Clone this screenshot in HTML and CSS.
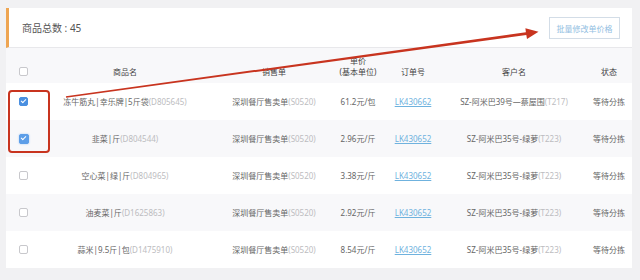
FILE: index.html
```html
<!DOCTYPE html>
<html lang="zh-CN">
<head>
    <meta charset="UTF-8">
    <meta name="viewport" content="width=device-width, initial-scale=1.0">
    <title>商品列表</title>
    <link rel="stylesheet" href="styles.css">
</head>
<body>
    <div class="panel">
        <div class="panel-head">
            <span class="total">商品总数 : 45</span>
            <button class="batch-btn">批量修改单价格</button>
        </div>
        <div class="list">
            <div class="row head-row">
                <div class="cell"><span class="box"></span></div>
                <div class="cell">商品名</div>
                <div class="cell">销售单</div>
                <div class="cell two-line">单价<br>(基本单位)</div>
                <div class="cell">订单号</div>
                <div class="cell">客户名</div>
                <div class="cell state">状态</div>
            </div>
            <div class="row">
                <div class="cell"><span class="box checked"></span></div>
                <div class="cell">冻牛筋丸|幸乐牌|5斤袋<span class="code">(D805645)</span></div>
                <div class="cell">深圳餐厅售卖单<span class="code">(S0520)</span></div>
                <div class="cell">61.2元/包</div>
                <div class="cell"><a class="link" href="#">LK430662</a></div>
                <div class="cell">SZ-阿米巴39号—蔡屋围<span class="code">(T217)</span></div>
                <div class="cell state">等待分拣</div>
            </div>
            <div class="row">
                <div class="cell"><span class="box checked focus"></span></div>
                <div class="cell">韭菜|斤<span class="code">(D804544)</span></div>
                <div class="cell">深圳餐厅售卖单<span class="code">(S0520)</span></div>
                <div class="cell">2.96元/斤</div>
                <div class="cell"><a class="link" href="#">LK430652</a></div>
                <div class="cell">SZ-阿米巴35号-绿萝<span class="code">(T223)</span></div>
                <div class="cell state">等待分拣</div>
            </div>
            <div class="row">
                <div class="cell"><span class="box"></span></div>
                <div class="cell">空心菜|绿|斤<span class="code">(D804965)</span></div>
                <div class="cell">深圳餐厅售卖单<span class="code">(S0520)</span></div>
                <div class="cell">3.38元/斤</div>
                <div class="cell"><a class="link" href="#">LK430652</a></div>
                <div class="cell">SZ-阿米巴35号-绿萝<span class="code">(T223)</span></div>
                <div class="cell state">等待分拣</div>
            </div>
            <div class="row">
                <div class="cell"><span class="box"></span></div>
                <div class="cell">油麦菜|斤<span class="code">(D1625863)</span></div>
                <div class="cell">深圳餐厅售卖单<span class="code">(S0520)</span></div>
                <div class="cell">2.92元/斤</div>
                <div class="cell"><a class="link" href="#">LK430652</a></div>
                <div class="cell">SZ-阿米巴35号-绿萝<span class="code">(T223)</span></div>
                <div class="cell state">等待分拣</div>
            </div>
            <div class="row">
                <div class="cell"><span class="box"></span></div>
                <div class="cell">蒜米|9.5斤|包<span class="code">(D1475910)</span></div>
                <div class="cell">深圳餐厅售卖单<span class="code">(S0520)</span></div>
                <div class="cell">8.54元/斤</div>
                <div class="cell"><a class="link" href="#">LK430652</a></div>
                <div class="cell">SZ-阿米巴35号-绿萝<span class="code">(T223)</span></div>
                <div class="cell state">等待分拣</div>
            </div>
        </div>
    </div>
    <svg class="annotation" width="640" height="280" viewBox="0 0 640 280">
        <rect x="9" y="91" width="40" height="61" rx="3" fill="none" stroke="#c8341f" stroke-width="2"/>
        <path d="M65.9 96.3 L525.9 32.3 L525.4 28.2 L538.5 31.8 L527 39 L526.3 35.1 L66.1 97.7 Z" fill="#c8341f"/>
    </svg>
</body>
</html>
```

FILE: styles.css
```css
body {
    margin: 0;
    padding: 8px 8px 0 6px;
    background: #f1f1f3;
    font-family: "Noto Sans", "Noto Sans CJK SC", sans-serif;
    color: #666;
    position: relative;
    height: 280px;
    box-sizing: border-box;
    overflow: hidden;
}
.panel {
    width: 626px;
    background: #fff;
}
.panel-head {
    height: 40px;
    box-sizing: border-box;
    display: flex;
    justify-content: space-between;
    align-items: center;
    border-left: 3px solid #eea552;
    border-bottom: 1px solid #e8e8eb;
    padding: 0 12px 0 13px;
}
.total {
    font-size: 10px;
    color: #555;
}
.batch-btn {
    width: 71px;
    height: 22px;
    padding: 0;
    margin-top: 1px;
    background: #fff;
    border: 1px solid #d3dde7;
    color: #93c0e2;
    font-family: inherit;
    font-size: 8px;
}
.row {
    display: grid;
    grid-template-columns: 35px 168px 130px 38px 72px 130px 1fr;
    height: 37px;
    font-size: 8px;
    line-height: 11px;
}
.row:nth-child(odd) {
    background: #f8f8fa;
}
.head-row {
    height: 35px;
    color: #444;
    background: #fff;
}
.head-row .cell {
    align-items: flex-end;
    padding-bottom: 6px;
}
.cell {
    display: flex;
    justify-content: center;
    align-items: center;
    white-space: nowrap;
    text-align: center;
}
.two-line {
    line-height: 11px;
}
.state {
    padding-left: 7px;
}
.code {
    color: #bcbcc0;
}
.link {
    color: #6fb2de;
    text-decoration: underline;
}
.box {
    display: inline-block;
    width: 7px;
    height: 7px;
    border: 1px solid #c8c8cc;
    border-radius: 2px;
    background: #fff;
    position: relative;
}
.head-row .box {
    margin-bottom: 1px;
}
.box.checked {
    background: #4a8fe0;
    border-color: #4a8fe0;
}
.box.checked::after {
    content: "";
    position: absolute;
    left: 2px;
    top: 0;
    width: 2px;
    height: 4px;
    border: solid #fff;
    border-width: 0 1px 1px 0;
    transform: rotate(45deg);
}
.box.focus {
    width: 8px;
    height: 8px;
    background: #5d9ee8;
    border-color: #5d9ee8;
    box-shadow: 0 0 2px #9cc4f2;
}
.annotation {
    position: absolute;
    left: 0;
    top: 0;
    pointer-events: none;
}
```
